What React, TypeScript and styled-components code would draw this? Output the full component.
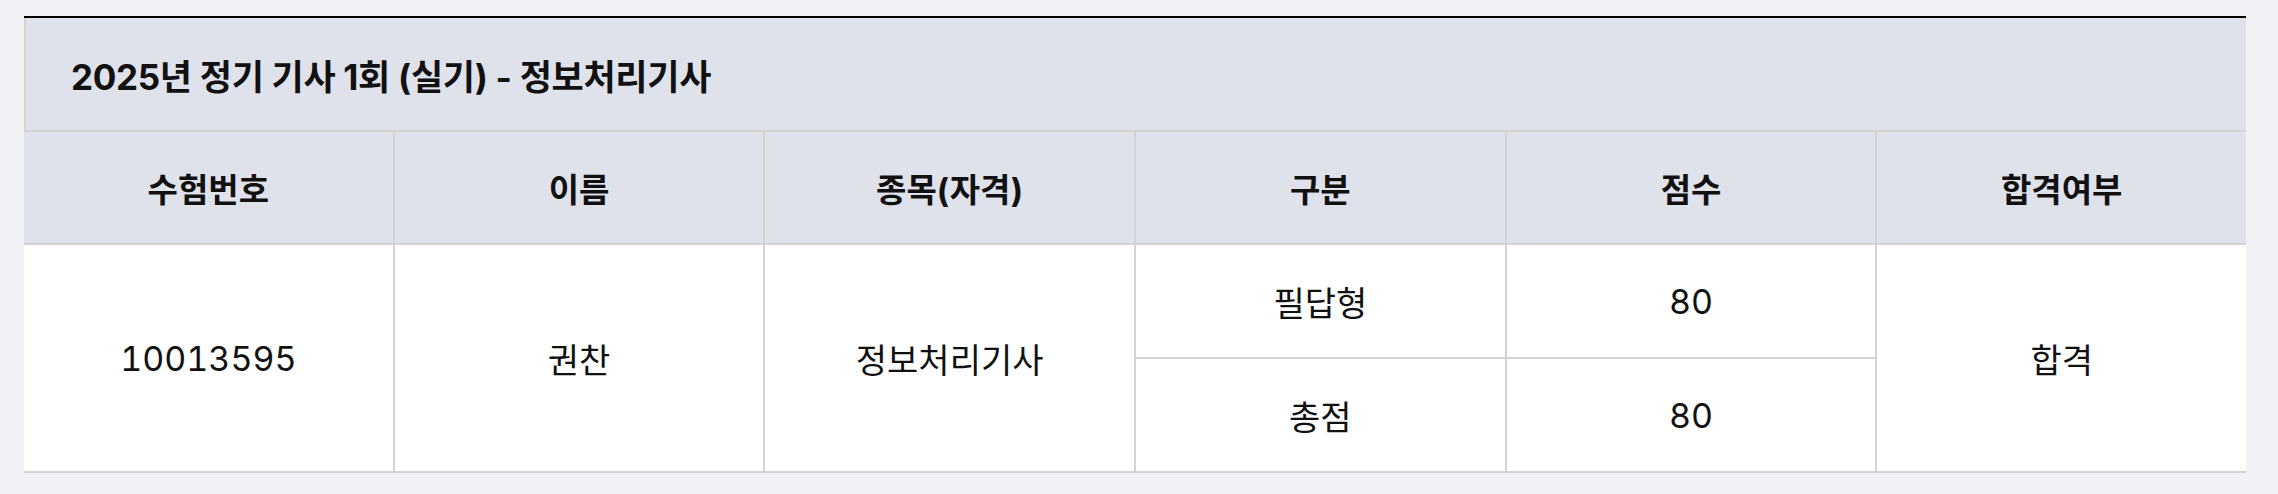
import React from "react";
import styled, { createGlobalStyle } from "styled-components";

const GlobalStyle = createGlobalStyle`
  html, body {
    margin: 0;
    padding: 0;
    background: #f0f2f6;
  }
  body {
    font-family: Inter, "Noto Sans CJK KR", "Noto Sans", sans-serif;
    color: #111;
  }
`;

const Page = styled.div`
  width: 2278px;
  height: 494px;
  box-sizing: border-box;
  padding: 16px 32px 0 24px;
  background: #f0f2f6;
`;

const ResultTable = styled.section`
  width: 100%;
  border-top: 2px solid #000;
`;

const Caption = styled.h2`
  margin: 0;
  height: 114px;
  box-sizing: border-box;
  display: flex;
  align-items: center;
  padding-left: 45px;
  background: #dfe2eb;
  border-left: 2px solid #d3d3d3;
  border-bottom: 2px solid #d3d3d3;
  font-size: 35px;
  font-weight: 700;
  letter-spacing: -0.3px;
`;

const Grid = styled.div`
  display: grid;
  grid-template-columns: repeat(6, 1fr);
  grid-template-rows: 111px 112px 112px;
  gap: 2px;
  background: #d3d3d3;
  padding-bottom: 2px;
`;

const Cell = styled.div<{ $head?: boolean; $span?: number }>`
  display: flex;
  align-items: center;
  justify-content: center;
  background: ${(p) => (p.$head ? "#dfe2eb" : "#fff")};
  font-size: ${(p) => (p.$head ? "33px" : "34px")};
  font-weight: ${(p) => (p.$head ? 700 : 400)};
  font-variant-numeric: tabular-nums;
  grid-row: ${(p) => (p.$span ? `span ${p.$span}` : "auto")};
`;

const headers = ["수험번호", "이름", "종목(자격)", "구분", "점수", "합격여부"];

export default function App() {
  return (
    <>
      <GlobalStyle />
      <Page>
        <ResultTable>
          <Caption>2025년 정기 기사 1회 (실기) - 정보처리기사</Caption>
          <Grid>
            {headers.map((h) => (
              <Cell key={h} $head>
                {h}
              </Cell>
            ))}
            <Cell $span={2}>10013595</Cell>
            <Cell $span={2}>권찬</Cell>
            <Cell $span={2}>정보처리기사</Cell>
            <Cell>필답형</Cell>
            <Cell>80</Cell>
            <Cell $span={2}>합격</Cell>
            <Cell>총점</Cell>
            <Cell>80</Cell>
          </Grid>
        </ResultTable>
      </Page>
    </>
  );
}
